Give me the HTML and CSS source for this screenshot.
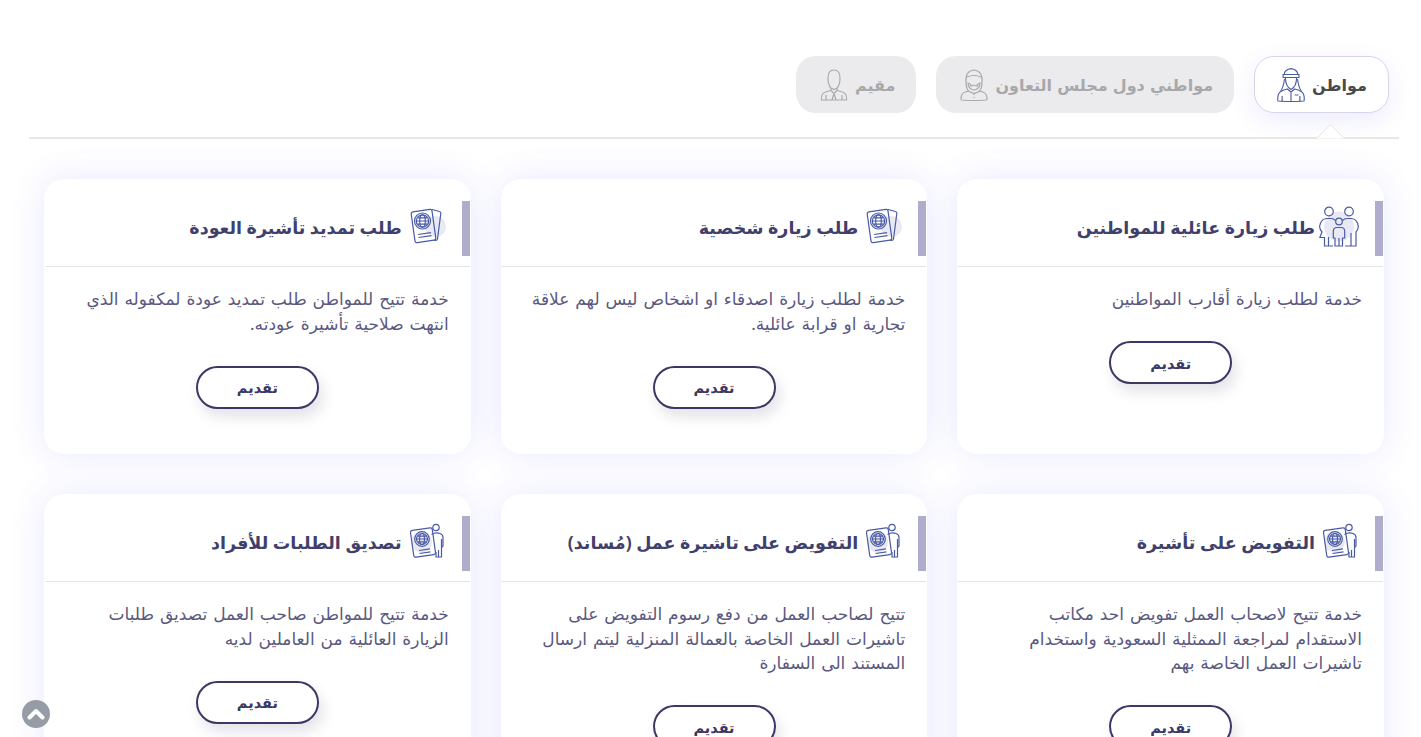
FILE: index.html
```html
<!DOCTYPE html>
<html lang="ar" dir="rtl">
<head>
<meta charset="utf-8">
<title>الخدمات</title>
<link rel="stylesheet" href="styles.css">
</head>
<body>
<svg class="defs" width="0" height="0" aria-hidden="true">
  <symbol id="i-passport" viewBox="0 0 36 36">
    <circle cx="25.500" cy="18.500" r="10.500" class="blob"/>
    <path d="M22 1.500l7.500 2q1.500.4 1.300 2L27.500 31q-.3 1.500-2 1.300l-1.500-.2"/>
    <rect x="3" y="2.500" width="21" height="31" rx="2" transform="rotate(-8 13.500 18)"/>
    <circle cx="12.500" cy="13" r="8"/>
    <circle cx="12.500" cy="13" r="6.200"/>
    <ellipse cx="12.500" cy="13" rx="2.800" ry="6.200"/>
    <path d="M6.300 13h12.400M7.500 9.800h10M7.500 16.200h10M8 26.500l13-1.800M8.500 29.500l13-1.800"/>
  </symbol>
  <symbol id="i-permit" viewBox="0 0 36 36">
    <circle cx="11.500" cy="19" r="10.500" class="blob"/>
    <circle cx="26" cy="4.500" r="3.200"/>
    <path d="M21.500 11.500q4-2.500 8.500-1q3 1 3 4v8q0 1.500-1.500 2V34H26v-5M31.500 16v8.500M28.500 34V27"/>
    <rect x="2" y="6" width="22" height="27" rx="2" transform="rotate(-8 13 19.500)"/>
    <circle cx="12" cy="16" r="7.300"/>
    <circle cx="12" cy="16" r="5.500"/>
    <ellipse cx="12" cy="16" rx="2.500" ry="5.500"/>
    <path d="M6.500 16h11M7.500 13.200h9M7.500 18.800h9M9 27.500l11-1.600M9.500 30.500l11-1.600"/>
  </symbol>
  <symbol id="i-family" viewBox="0 0 42 42">
    <circle cx="20" cy="21.500" r="15" class="blob"/>
    <circle cx="10" cy="6.500" r="4.300"/>
    <circle cx="30" cy="6.500" r="4.300"/>
    <path d="M16.500 15.500Q14.500 13.500 12 13.500H7.500Q2 14 .7 21q-.4 3 2.300 6l-2.200 5.500H5.500V41h8.500"/>
    <path d="M23.500 15.500Q25.500 13.500 28 13.500h4.500Q38 14 39.300 21q.4 3-2.300 6l0 14H26"/>
    <path d="M32 28v13M9.500 32v9"/>
    <circle cx="20" cy="16.500" r="3.300"/>
    <path d="M14.300 26.500q0-4 3.500-4h4.400q3.500 0 3.500 4v6.500h-2.200V41h-7.500V33h-1.700zM20 33v8"/>
  </symbol>
  <symbol id="i-saudi" viewBox="0 0 30 34" preserveAspectRatio="none">
    <path d="M7.500 6.500Q8.500 1.500 15 .7q6.500.8 7.500 5.800M6.500 6.500h17v3h-17z"/>
    <path d="M9 9.500q0 9 6 12q6-3 6-12M8 11q-1 8-4 12M22 11q1 8 4 12"/>
    <path d="M1 33q-1-7 3-9.500q3-1.800 7-2.500l4 3l4-3q4 .7 7 2.500q4 2.500 3 9.500q-14 1-28 0zM15 24v9.500M19 27h4M5.500 28v5M24.500 28v5"/>
  </symbol>
  <symbol id="i-gulf" viewBox="0 0 28 32">
    <path d="M6 13q-1-11 8-12q9 1 8 12q0 7-3 9.500l-5 2l-5-2Q6 20 6 13z"/>
    <path d="M7 8q7-3 14 0M8 14q3 1 3 3q3-1.500 6 0q0-2 3-3q0 6-6 7q-6-1-6-7z"/>
    <path d="M9 22q-7 1-7.500 5q-1 3 0 4Q14 32 26.500 31q1-1 0-4Q26 23 19 22M14 25v1M14 28v1"/>
  </symbol>
  <symbol id="i-resident" viewBox="0 0 28 32">
    <path d="M8 9q0-8 6-8q6 0 6 8q0 7-3 10l-3 1.500L11 19q-3-3-3-10z"/>
    <path d="M11 19v2.500q-7 1.500-8.500 3.500Q1 27 1.500 31h25q.5-4-1-6q-1.500-2-8.500-3.500V19M11 21.500l3 3l3-3M14 24.500l-2 6.500M14 24.500l2 6.500M6 26v5M22 26v5"/>
  </symbol>
</svg>

<main class="page">
  <nav class="tabs">
    <button class="tab tab-active" type="button">
      <span class="tab-label">مواطن</span>
      <svg class="tab-icon icon-saudi" width="28" height="34"><use href="#i-saudi"/></svg>
    </button>
    <button class="tab" type="button">
      <span class="tab-label">مواطني دول مجلس التعاون</span>
      <svg class="tab-icon" width="28" height="32"><use href="#i-gulf"/></svg>
    </button>
    <button class="tab" type="button">
      <span class="tab-label">مقيم</span>
      <svg class="tab-icon" width="28" height="32"><use href="#i-resident"/></svg>
    </button>
  </nav>
  <div class="rule"><span class="caret"></span></div>

  <section class="grid">
    <article class="card">
      <header class="card-head"><span class="accent"></span><svg class="card-icon card-icon-wide" width="42" height="42"><use href="#i-family"/></svg><h2>طلب زيارة عائلية للمواطنين</h2></header>
      <p class="desc">خدمة لطلب زيارة أقارب المواطنين</p>
      <a class="apply" href="#">تقديم</a>
    </article>
    <article class="card">
      <header class="card-head"><span class="accent"></span><svg class="card-icon" width="36" height="36"><use href="#i-passport"/></svg><h2>طلب زيارة شخصية</h2></header>
      <p class="desc">خدمة لطلب زيارة اصدقاء او اشخاص ليس لهم علاقة<br>تجارية او قرابة عائلية.</p>
      <a class="apply" href="#">تقديم</a>
    </article>
    <article class="card">
      <header class="card-head"><span class="accent"></span><svg class="card-icon" width="36" height="36"><use href="#i-passport"/></svg><h2>طلب تمديد تأشيرة العودة</h2></header>
      <p class="desc">خدمة تتيح للمواطن طلب تمديد عودة لمكفوله الذي<br>انتهت صلاحية تأشيرة عودته.</p>
      <a class="apply" href="#">تقديم</a>
    </article>
    <article class="card">
      <header class="card-head"><span class="accent"></span><svg class="card-icon" width="36" height="36"><use href="#i-permit"/></svg><h2>التفويض على تأشيرة</h2></header>
      <p class="desc">خدمة تتيح لاصحاب العمل تفويض احد مكاتب<br>الاستقدام لمراجعة الممثلية السعودية واستخدام<br>تاشيرات العمل الخاصة بهم</p>
      <a class="apply" href="#">تقديم</a>
    </article>
    <article class="card">
      <header class="card-head"><span class="accent"></span><svg class="card-icon" width="36" height="36"><use href="#i-permit"/></svg><h2>التفويض على تاشيرة عمل (مُساند)</h2></header>
      <p class="desc">تتيح لصاحب العمل من دفع رسوم التفويض على<br>تاشيرات العمل الخاصة بالعمالة المنزلية ليتم ارسال<br>المستند الى السفارة</p>
      <a class="apply" href="#">تقديم</a>
    </article>
    <article class="card">
      <header class="card-head"><span class="accent"></span><svg class="card-icon" width="36" height="36"><use href="#i-permit"/></svg><h2>تصديق الطلبات للأفراد</h2></header>
      <p class="desc">خدمة تتيح للمواطن صاحب العمل تصديق طلبات<br>الزيارة العائلية من العاملين لديه</p>
      <a class="apply" href="#">تقديم</a>
    </article>
  </section>
</main>

<a class="to-top" href="#" aria-label="أعلى">
  <svg width="18" height="14" viewBox="0 0 18 14"><path d="M2.500 10.500L9 4l6.500 6.500"/></svg>
</a>
</body>
</html>
```

FILE: styles.css
```css
* { box-sizing: border-box; }
html, body { height: 100%; }
body {
  margin: 0;
  background: #fff;
  overflow: hidden;
  font-family: "Noto Sans", "DejaVu Sans", sans-serif;
  color: #3b3866;
}
.defs { position: absolute; }
symbol * { fill: none; stroke: currentColor; stroke-width: 1.2; }
symbol .blob { fill: #e9e9f3; stroke: none; }

.page { width: 1370px; margin: 0 22px 0 29px; padding-top: 56px; }

.tabs { display: flex; gap: 20px; padding: 0 10px; }
.tab {
  display: flex;
  align-items: center;
  gap: 7px;
  height: 57px;
  padding: 0 21px 0 24px;
  border: 0;
  border-radius: 20px;
  background: #ebebed;
  color: #a8a8ab;
  font: inherit;
  font-size: 16px;
  font-weight: 700;
  word-spacing: .9px;
}
.tab-icon { color: #a9a9ac; flex: none; }
.tab-active {
  padding-left: 22px;
  background: #fff;
  border: 1px solid #d9d3ec;
  color: #4a4a4a;
  box-shadow: 0 8px 24px rgba(110, 110, 240, .12);
}
.tab-active .icon-saudi { color: #4a5ba6; }

.rule {
  position: relative;
  height: 2px;
  margin-top: 24px;
  background: #e9e7e6;
}
.caret {
  position: absolute;
  top: -9.500px;
  right: 58.500px;
  width: 21px;
  height: 21px;
  background: #fff;
  border-top: 1px solid #e6e1dc;
  border-left: 1px solid #e6e1dc;
  transform: rotate(45deg);
  clip-path: polygon(0 0, 100% 0, 0 100%);
}

.grid {
  display: grid;
  grid-template-columns: repeat(3, 1fr);
  gap: 40px 30px;
  padding: 40px 15px 0;
}
.card {
  display: flex;
  flex-direction: column;
  align-items: center;
  background: #fff;
  border-radius: 20px;
  box-shadow: 0 0 35px rgba(90, 90, 255, .14);
  padding-bottom: 45px;
  min-height: 275px;
}
.card-head {
  align-self: stretch;
  display: flex;
  align-items: center;
  height: 88px;
  margin: 0 1px;
  padding: 22px 0 11px;
  border-bottom: 1px solid #e4e4e6;
}
.accent { width: 8px; height: 55px; background: #aeadcb; flex: none; margin-left: 14px; }
.card-icon {
  color: #4a5ba6;
  flex: none;
  align-self: flex-start;
  margin: 7px 2px 0 8px;
}
.card-icon-wide { margin: 4px 0 0 4px; }
.card-head h2 { margin: 0 0 2px; font-size: 17.500px; font-weight: 700; color: #413f6b; white-space: nowrap; }
.desc {
  align-self: stretch;
  margin: 20px 0 29.500px;
  padding: 0 22px;
  font-size: 17px;
  line-height: 24.500px;
  word-spacing: 1.500px;
  white-space: nowrap;
  color: #5a5880;
}
.apply {
  display: flex;
  align-items: center;
  justify-content: center;
  width: 123px;
  height: 43px;
  border: 2px solid #3b3866;
  border-radius: 22px;
  background: #fff;
  box-shadow: 4px 8px 14px rgba(60, 56, 102, .14);
  color: #3b3866;
  font-size: 14.500px;
  font-weight: 700;
  text-decoration: none;
}
.to-top {
  position: fixed;
  left: 22px;
  bottom: 9px;
  width: 28px;
  height: 28px;
  display: flex;
  align-items: center;
  justify-content: center;
  border-radius: 50%;
  background: #969ca5;
}
.to-top path { fill: none; stroke: #fff; stroke-width: 4; stroke-linecap: round; stroke-linejoin: round; }
```
